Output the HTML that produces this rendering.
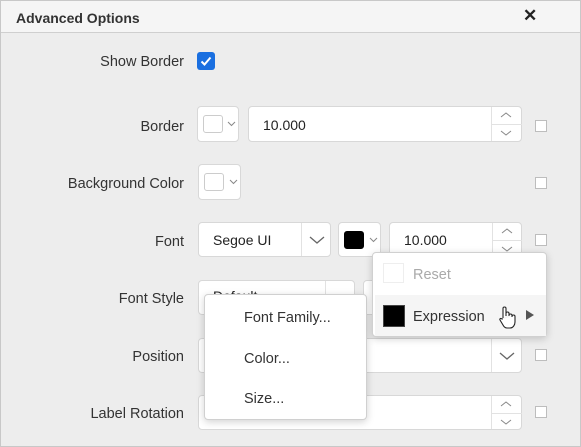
<!DOCTYPE html>
<html><head><style>
*{box-sizing:border-box;margin:0;padding:0}
body{width:581px;height:447px;overflow:hidden;background:#fff;font-family:"Liberation Sans",sans-serif;color:#333;position:relative}
.dlg{position:absolute;left:0;top:0;width:581px;height:447px;box-shadow:inset 0 0 0 1px #c8c8c8;background:#ededed}
.hdr{position:absolute;left:1px;top:1px;width:579px;height:32px;background:#f5f5f5;border-bottom:1px solid #cfcfcf}
.hdr span{position:absolute;left:15px;top:9px;font-size:14px;font-weight:bold;color:#333}
.x{position:absolute;left:522px;top:5px;font-size:17px;font-weight:bold;color:#222}
.lbl{position:absolute;right:397px;font-size:14.5px;color:#333;white-space:nowrap}
.box{position:absolute;background:#fff;border:1px solid #d8d8d8;border-radius:4px}
.div{position:absolute;top:0;bottom:0;width:1px;background:#e2e2e2}
.sw{position:absolute;left:5px;top:8px;width:20px;height:18px;border:1px solid #ccc;border-radius:3px;background:#fff}
.t{position:absolute;font-size:14px;color:#222}
.cb{position:absolute;left:535px;width:12px;height:12px;border:1px solid #bdbdbd;background:#fff}
svg{position:absolute}
.menu{position:absolute;background:#fff;border:1px solid #d0d0d0;border-radius:4px;box-shadow:0 2px 8px rgba(0,0,0,.18)}
.mi{position:absolute;font-size:14.5px;color:#333}
</style></head><body>
<div class="dlg">
<div class="hdr"><span>Advanced Options</span><div class="x">✕</div></div>

<div class="lbl" style="top:54px">Show Border</div>
<div style="position:absolute;left:197px;top:52px;width:18px;height:18px;background:#1a6fe0;border-radius:3px"></div>
<svg style="left:197px;top:52px" width="18" height="18"><path d="M4.5 9.5l3 3 6-7" stroke="#fff" stroke-width="2" fill="none"/></svg>

<div class="lbl" style="top:119px">Border</div>
<div class="box" style="left:197px;top:106px;width:42px;height:36px"><div class="sw"></div><svg style="left:29px;top:14px" width="9" height="6"><path d="M1 1l3.5 3.5L8 1" stroke="#888" fill="none"/></svg></div>
<div class="box" style="left:248px;top:106px;width:274px;height:36px"><div class="t" style="left:14px;top:10px">10.000</div><div class="div" style="left:242px"></div><div style="position:absolute;left:242px;top:17px;width:31px;height:1px;background:#e2e2e2"></div>
<svg style="left:251px;top:4px" width="12" height="8"><path d="M1 6l5-4 5 4" stroke="#888" fill="none"/></svg><svg style="left:251px;top:22px" width="12" height="8"><path d="M1 2l5 4 5-4" stroke="#888" fill="none"/></svg></div>
<div class="cb" style="top:120px"></div>

<div class="lbl" style="top:176px">Background Color</div>
<div class="box" style="left:198px;top:164px;width:43px;height:36px"><div class="sw"></div><svg style="left:30px;top:14px" width="9" height="6"><path d="M1 1l3.5 3.5L8 1" stroke="#888" fill="none"/></svg></div>
<div class="cb" style="top:177px"></div>

<div class="lbl" style="top:234px">Font</div>
<div class="box" style="left:198px;top:222px;width:133px;height:35px"><div class="t" style="left:14px;top:9px">Segoe UI</div><div class="div" style="left:102px"></div><svg style="left:110px;top:12px" width="16" height="10"><path d="M1 2l7 6 7-6" stroke="#666" stroke-width="1.3" fill="none"/></svg></div>
<div class="box" style="left:338px;top:222px;width:43px;height:35px"><div class="sw" style="background:#000;border-color:#000"></div><svg style="left:30px;top:14px" width="9" height="6"><path d="M1 1l3.5 3.5L8 1" stroke="#888" fill="none"/></svg></div>
<div class="box" style="left:389px;top:222px;width:133px;height:35px"><div class="t" style="left:14px;top:9px">10.000</div><div class="div" style="left:102px"></div><div style="position:absolute;left:102px;top:17px;width:30px;height:1px;background:#e2e2e2"></div>
<svg style="left:111px;top:4px" width="12" height="8"><path d="M1 6l5-4 5 4" stroke="#888" fill="none"/></svg><svg style="left:111px;top:22px" width="12" height="8"><path d="M1 2l5 4 5-4" stroke="#888" fill="none"/></svg></div>
<div class="cb" style="top:234px"></div>

<div class="lbl" style="top:291px">Font Style</div>
<div class="box" style="left:198px;top:280px;width:157px;height:35px"><div class="t" style="left:14px;top:7px">Default</div><div class="div" style="left:126px"></div></div>
<div class="box" style="left:363px;top:280px;width:159px;height:35px"></div>
<div class="cb" style="top:292px"></div>

<div class="lbl" style="top:349px">Position</div>
<div class="box" style="left:198px;top:338px;width:324px;height:35px"><div class="div" style="left:292px"></div><svg style="left:300px;top:12px" width="16" height="10"><path d="M1 2l7 6 7-6" stroke="#666" stroke-width="1.3" fill="none"/></svg></div>
<div class="cb" style="top:349px"></div>

<div class="lbl" style="top:406px">Label Rotation</div>
<div class="box" style="left:198px;top:395px;width:324px;height:35px"><div class="div" style="left:292px"></div><div style="position:absolute;left:292px;top:17px;width:31px;height:1px;background:#e2e2e2"></div>
<svg style="left:301px;top:4px" width="12" height="8"><path d="M1 6l5-4 5 4" stroke="#888" fill="none"/></svg><svg style="left:301px;top:22px" width="12" height="8"><path d="M1 2l5 4 5-4" stroke="#888" fill="none"/></svg></div>
<div class="cb" style="top:406px"></div>

<div class="menu" style="left:204px;top:294px;width:163px;height:126px">
<div class="mi" style="left:39px;top:15px">Font Family...</div>
<div class="mi" style="left:39px;top:56px">Color...</div>
<div class="mi" style="left:39px;top:96px">Size...</div>
</div>

<div class="menu" style="left:372px;top:252px;width:175px;height:85px">
<div style="position:absolute;left:10px;top:10px;width:21px;height:20px;border:1px solid #eee"></div>
<div class="mi" style="left:40px;top:14px;color:#aaa">Reset</div>
<div style="position:absolute;left:2px;top:42px;width:171px;height:41px;background:#f5f5f5"></div>
<div style="position:absolute;left:10px;top:52px;width:22px;height:22px;background:#000;border:1px solid #444"></div>
<div class="mi" style="left:40px;top:56px">Expression</div>
<svg style="left:124px;top:51px" width="20" height="26"><path d="M6 14V4.5a1.5 1.5 0 013 0V12M9 11V9.5a1.5 1.5 0 013 0V12M12 11.5a1.5 1.5 0 013 0V13M15 12.5a1.5 1.5 0 013 0V18c0 3-2 6-5 6H10c-2 0-3-1-4-3l-3-5c-.6-1 .6-2 1.6-1.2L6 15" fill="#fff" stroke="#222" stroke-width="1.1"/></svg>
<svg style="left:153px;top:57px" width="8" height="10"><path d="M0 0l8 5-8 5z" fill="#555"/></svg>
</div>
</div>
</body></html>
